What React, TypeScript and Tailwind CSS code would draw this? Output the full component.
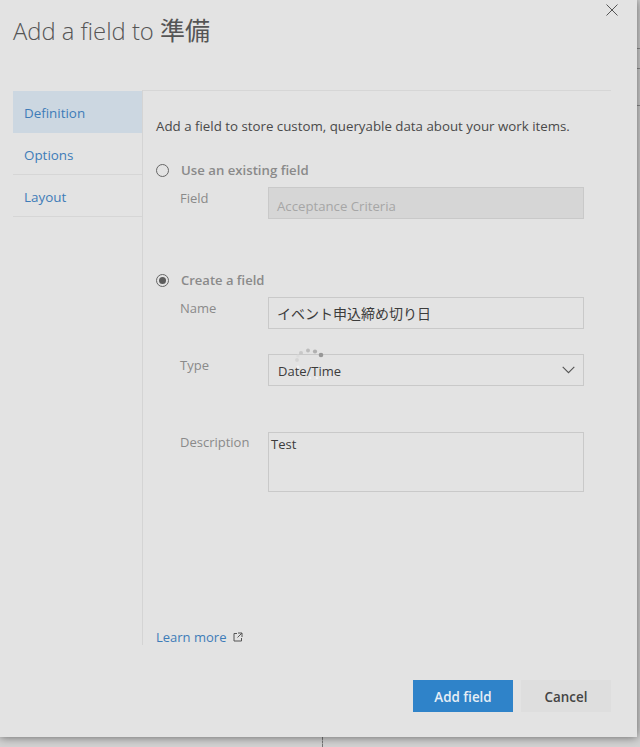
const font = "font-['Open_Sans','Noto_Sans_CJK_JP',sans-serif]";

const navItems = [
  { label: "Definition", active: true },
  { label: "Options", active: false },
  { label: "Layout", active: false },
];

function Spinner() {
  const dots = [
    { x: 4, y: 13, r: 1.9, fill: "#d4d4d4" },
    { x: 5, y: 9, r: 1.6, fill: "#dcdcdc" },
    { x: 8, y: 6, r: 2, fill: "#c8c8c8" },
    { x: 15, y: 3.5, r: 2, fill: "#bcbcbc" },
    { x: 22, y: 4.5, r: 2.1, fill: "#b0b0b0" },
    { x: 28, y: 8, r: 2.3, fill: "#979797" },
    { x: 5, y: 20, r: 1.6, fill: "#f0f0f0" },
    { x: 17, y: 31, r: 1.3, fill: "#f0f0f0" },
    { x: 24, y: 31, r: 1.3, fill: "#f0f0f0" },
  ];
  return (
    <svg className="absolute left-[293px] top-[347px]" width="34" height="34" viewBox="0 0 34 34">
      {dots.map((d) => (
        <circle key={d.x + "-" + d.y} cx={d.x} cy={d.y} r={d.r} fill={d.fill} />
      ))}
    </svg>
  );
}

export default function App() {
  return (
    <div className={`relative h-[747px] w-[640px] overflow-hidden bg-[#d2d2d2] ${font}`}>
      {/* bits of the page behind the dialog */}
      <div className="absolute left-[636px] top-[48px] h-px w-[4px] bg-[#8f8f8f]" />
      <div className="absolute left-[636px] top-[68px] h-px w-[4px] bg-[#8f8f8f]" />
      <div className="absolute left-[636px] top-[105px] h-px w-[4px] bg-[#8f8f8f]" />
      <div className="absolute left-[322px] top-[737px] h-[10px] border-l border-dashed border-[#777]" />

      <div className="relative flex h-[737px] w-[637px] flex-col bg-[#e3e3e3] shadow-[0_0_9px_rgba(0,0,0,0.55)]">
        <header className="flex h-[90px] items-start justify-between pl-[13px] pr-[19px]">
          <h1 className="mt-[14px] text-[23.8px] font-light leading-[32px] text-[#555]">
            Add a field to <span className="text-[25px] font-normal">準備</span>
          </h1>
          <button className="mt-[4px] text-[#555]" aria-label="Close">
            <svg width="12" height="12" viewBox="0 0 12 12" fill="none" stroke="currentColor" strokeWidth="1">
              <path d="M0.5 0.5 11.5 11.5M11.5 0.5 0.5 11.5" />
            </svg>
          </button>
        </header>

        <div className="ml-[13px] flex h-[555px] w-[598px]">
          <nav className="w-[129px] shrink-0 pt-px" aria-label="Sections">
            {navItems.map((item) => (
              <div
                key={item.label}
                className={`flex h-[42px] items-center pl-[11px] text-[13.4px] text-[#3e7cb8] ${
                  item.active ? "bg-[#ccd7e1] pt-[2px]" : "border-b border-[#d6d6d6] pt-[4px]"
                }`}
              >
                {item.label}
              </div>
            ))}
          </nav>

          <main className="flex flex-1 flex-col border-l border-[#d4d4d4]">
            <div className="flex flex-1 flex-col border-t border-[#d6d6d6] pl-[13px]">
              <p className="mt-[26px] text-[13.3px] leading-[18px] text-[#4a4a4a]">
                Add a field to store custom, queryable data about your work items.
              </p>

              <div className="mt-[26px] flex items-center gap-[12px]">
                <span className="h-[13px] w-[13px] rounded-full border border-[#666]" />
                <span className="text-[13.2px] font-semibold leading-[18px] text-[#8a8a8a]">Use an existing field</span>
              </div>
              <div className="mt-[8px] flex pl-[24px]">
                <span className="w-[88px] pt-[2px] text-[13px] leading-[18px] text-[#8a8a8a]">Field</span>
                <div className="flex h-[32px] w-[316px] items-center border border-[#c9c9c9] bg-[#d6d6d6] pl-[8px] pt-[8px] text-[13.2px] text-[#a6a6a6]">
                  Acceptance Criteria
                </div>
              </div>

              <div className="mt-[52px] flex items-center gap-[12px]">
                <span className="flex h-[13px] w-[13px] items-center justify-center rounded-full border border-[#666]">
                  <span className="h-[7px] w-[7px] rounded-full bg-[#5c5c5c]" />
                </span>
                <span className="text-[13px] font-semibold leading-[18px] text-[#8a8a8a]">Create a field</span>
              </div>
              <div className="mt-[8px] flex pl-[24px]">
                <span className="w-[88px] pt-[2px] text-[13px] leading-[18px] text-[#8a8a8a]">Name</span>
                <div className="flex h-[32px] w-[316px] items-center border border-[#c9c9c9] pl-[8px] text-[14px] text-[#3c3c3c]">
                  イベント申込締め切り日
                </div>
              </div>
              <div className="mt-[25px] flex pl-[24px]">
                <span className="w-[88px] pt-[2px] text-[13px] leading-[18px] text-[#8a8a8a]">Type</span>
                <div className="flex h-[32px] w-[316px] items-center justify-between border border-[#c9c9c9] pl-[9px] pr-[8px] text-[13px] text-[#3c3c3c]">
                  <span className="pt-[3px]">Date/Time</span>
                  <svg width="13" height="8" viewBox="0 0 13 8" fill="none" stroke="#555" strokeWidth="1.1">
                    <path d="M0.7 0.8 6.5 6.6 12.3 0.8" />
                  </svg>
                </div>
              </div>
              <div className="mt-[46px] flex pl-[24px]">
                <span className="w-[88px] pt-[1px] text-[13px] leading-[18px] text-[#8a8a8a]">Description</span>
                <div className="h-[60px] w-[316px] border border-[#c9c9c9] px-[2px] pt-[2px] text-[13px] leading-[18px] text-[#3c3c3c]">
                  Test
                </div>
              </div>

              <a className="mt-auto mb-[-1px] flex items-center gap-[7px] text-[13px] leading-[18px] text-[#3e7cb8]" href="#">
                Learn more
                <svg width="10" height="10" viewBox="0 0 10 10" fill="none" stroke="#555" strokeWidth="1">
                  <path d="M4 1.5H1V9H8.5V6M5 1H9V5M9 1 4.5 5.5" />
                </svg>
              </a>
            </div>
          </main>
        </div>

        <footer className="mt-[35px] flex justify-end gap-[8px] pr-[26px]">
          <button className="h-[32px] w-[100px] bg-[#2f83c9] pt-[2px] text-[13.4px] font-semibold text-[#e6eef6]">Add field</button>
          <button className="h-[32px] w-[90px] bg-[#dedede] pt-[2px] text-[13.4px] font-semibold text-[#444]">Cancel</button>
        </footer>
      </div>
      <Spinner />
    </div>
  );
}
